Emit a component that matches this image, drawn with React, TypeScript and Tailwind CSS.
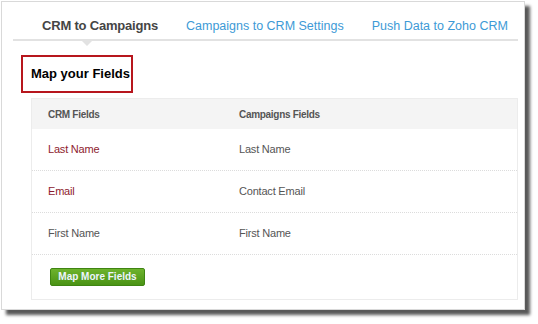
export default function App() {
  const rows = [
    { crm: "Last Name", camp: "Last Name", red: true },
    { crm: "Email", camp: "Contact Email", red: true },
    { crm: "First Name", camp: "First Name", red: false },
  ];

  return (
    <div className="w-[538px] h-[324px] bg-white p-[1px] font-['Liberation_Sans',Arial,sans-serif]">
      <div className="w-[524px] h-[309px] border border-[#d9d9d9] bg-white shadow-[5px_5px_3px_rgba(0,0,0,0.65)] pl-[11px] pr-[6px]">
        {/* tabs */}
        <div className="flex h-[37px] items-center pt-[11px] pl-[29px] text-[12.5px]">
          <span className="text-[13px] font-bold text-[#454545] tracking-[-0.2px]">CRM to Campaigns</span>
          <span className="ml-[28px] text-[#3d9ad6]">Campaigns to CRM Settings</span>
          <span className="ml-[28px] text-[#3d9ad6]">Push Data to Zoho CRM</span>
        </div>
        <div className="relative h-[2px] bg-[#e2e2e2]">
          <div className="absolute left-[69px] top-[2px] w-0 h-0 border-l-[5px] border-r-[5px] border-t-[5px] border-l-transparent border-r-transparent border-t-[#e2e2e2]" />
        </div>

        <div className="ml-[8px] mt-[14px] w-[112px] h-[38px] border-2 border-[#b7161d] flex items-center pl-[8px]">
          <span className="text-[13px] font-bold text-black">Map your Fields</span>
        </div>

        {/* fields table */}
        <div className="ml-[18px] mt-[5px] border border-[#ececec] text-[11px]">
          <div className="grid grid-cols-[191px_1fr] h-[30px] items-center bg-[#f4f4f4] pl-[16px] text-[10px] font-bold text-[#555] tracking-[-0.3px]">
            <span>CRM Fields</span>
            <span>Campaigns Fields</span>
          </div>
          {rows.map((r, i) => (
            <div
              key={i}
              className="grid grid-cols-[191px_1fr] h-[42px] items-center pl-[16px] border-b border-dotted border-[#dcdcdc] tracking-[-0.2px]"
            >
              <span className={r.red ? "text-[#8e1b2e]" : "text-[#555]"}>{r.crm}</span>
              <span className="text-[#555]">{r.camp}</span>
            </div>
          ))}
          <div className="h-[44px] pt-[13px] pl-[18px]">
            <button className="h-[18px] w-[95px] rounded-[2px] border border-[#3f8512] bg-gradient-to-b from-[#6db32d] to-[#4a9314] text-[10px] font-bold text-[#eef5ff] leading-none">
              Map More Fields
            </button>
          </div>
        </div>
      </div>
    </div>
  );
}
